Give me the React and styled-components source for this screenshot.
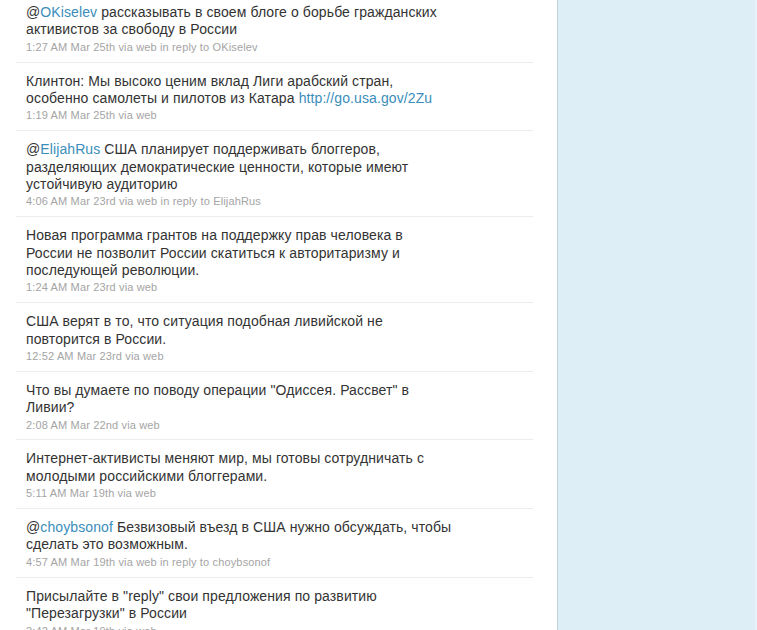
import React from 'react';
import styled, { createGlobalStyle } from 'styled-components';

const GlobalStyle = createGlobalStyle`
  html, body {
    margin: 0;
    padding: 0;
    background: #ffffff;
    overflow: hidden;
  }
`;

const Page = styled.div`
  display: grid;
  grid-template-columns: 557px 1fr;
  width: 757px;
  height: 630px;
  overflow: hidden;
  font-family: 'Liberation Sans', Arial, sans-serif;
`;

const Main = styled.main`
  background: #ffffff;
  padding: 0 24px 0 16px;
  overflow: hidden;
`;

const Sidebar = styled.aside`
  background: #ddeef6;
  border-left: 1px solid #c3d3dc;
  border-right: 2px solid #e6f2f8;
`;

const TweetList = styled.ol`
  list-style: none;
  margin: -6px 0 0 0;
  padding: 0;
`;

const Tweet = styled.li`
  padding: 10px 10px 6px 10px;
  border-bottom: 1px solid #ececec;
`;

const Body = styled.p`
  margin: 0;
  max-width: 426px;
  font-size: 14px;
  line-height: 17.4px;
  letter-spacing: 0.1px;
  color: #333333;
`;

const Link = styled.a`
  color: #3a8dbc;
  text-decoration: none;
`;

const Meta = styled.div`
  margin-top: 1px;
  font-size: 11px;
  line-height: 15.8px;
  letter-spacing: 0.15px;
  color: #a4a4a4;
`;

const tweets = [
  {
    reply: 'OKiselev',
    text: 'рассказывать в своем блоге о борьбе гражданских активистов за свободу в России',
    meta: '1:27 AM Mar 25th via web',
  },
  {
    text: 'Клинтон: Мы высоко ценим вклад Лиги арабский стран, особенно самолеты и пилотов из Катара',
    url: 'http://go.usa.gov/2Zu',
    meta: '1:19 AM Mar 25th via web',
  },
  {
    reply: 'ElijahRus',
    text: 'США планирует поддерживать блоггеров, разделяющих демократические ценности, которые имеют устойчивую аудиторию',
    meta: '4:06 AM Mar 23rd via web',
  },
  {
    text: 'Новая программа грантов на поддержку прав человека в России не позволит России скатиться к авторитаризму и последующей революции.',
    meta: '1:24 AM Mar 23rd via web',
  },
  {
    text: 'США верят в то, что ситуация подобная ливийской не повторится в России.',
    meta: '12:52 AM Mar 23rd via web',
  },
  {
    text: 'Что вы думаете по поводу операции "Одиссея. Рассвет" в Ливии?',
    meta: '2:08 AM Mar 22nd via web',
  },
  {
    text: 'Интернет-активисты меняют мир, мы готовы сотрудничать с молодыми российскими блоггерами.',
    meta: '5:11 AM Mar 19th via web',
  },
  {
    reply: 'choybsonof',
    text: 'Безвизовый въезд в США нужно обсуждать, чтобы сделать это возможным.',
    meta: '4:57 AM Mar 19th via web',
  },
  {
    text: 'Присылайте в "reply" свои предложения по развитию "Перезагрузки" в России',
    meta: '2:42 AM Mar 19th via web',
  },
];

const App = () => (
  <>
    <GlobalStyle />
    <Page>
      <Main>
        <TweetList>
          {tweets.map((t, i) => (
            <Tweet key={i}>
              <Body>
                {t.reply && (
                  <>
                    @<Link href="#">{t.reply}</Link>{' '}
                  </>
                )}
                {t.text}
                {t.url && (
                  <>
                    {' '}
                    <Link href="#">{t.url}</Link>
                  </>
                )}
              </Body>
              <Meta>
                {t.meta}
                {t.reply && ` in reply to ${t.reply}`}
              </Meta>
            </Tweet>
          ))}
        </TweetList>
      </Main>
      <Sidebar />
    </Page>
  </>
);

export default App;
